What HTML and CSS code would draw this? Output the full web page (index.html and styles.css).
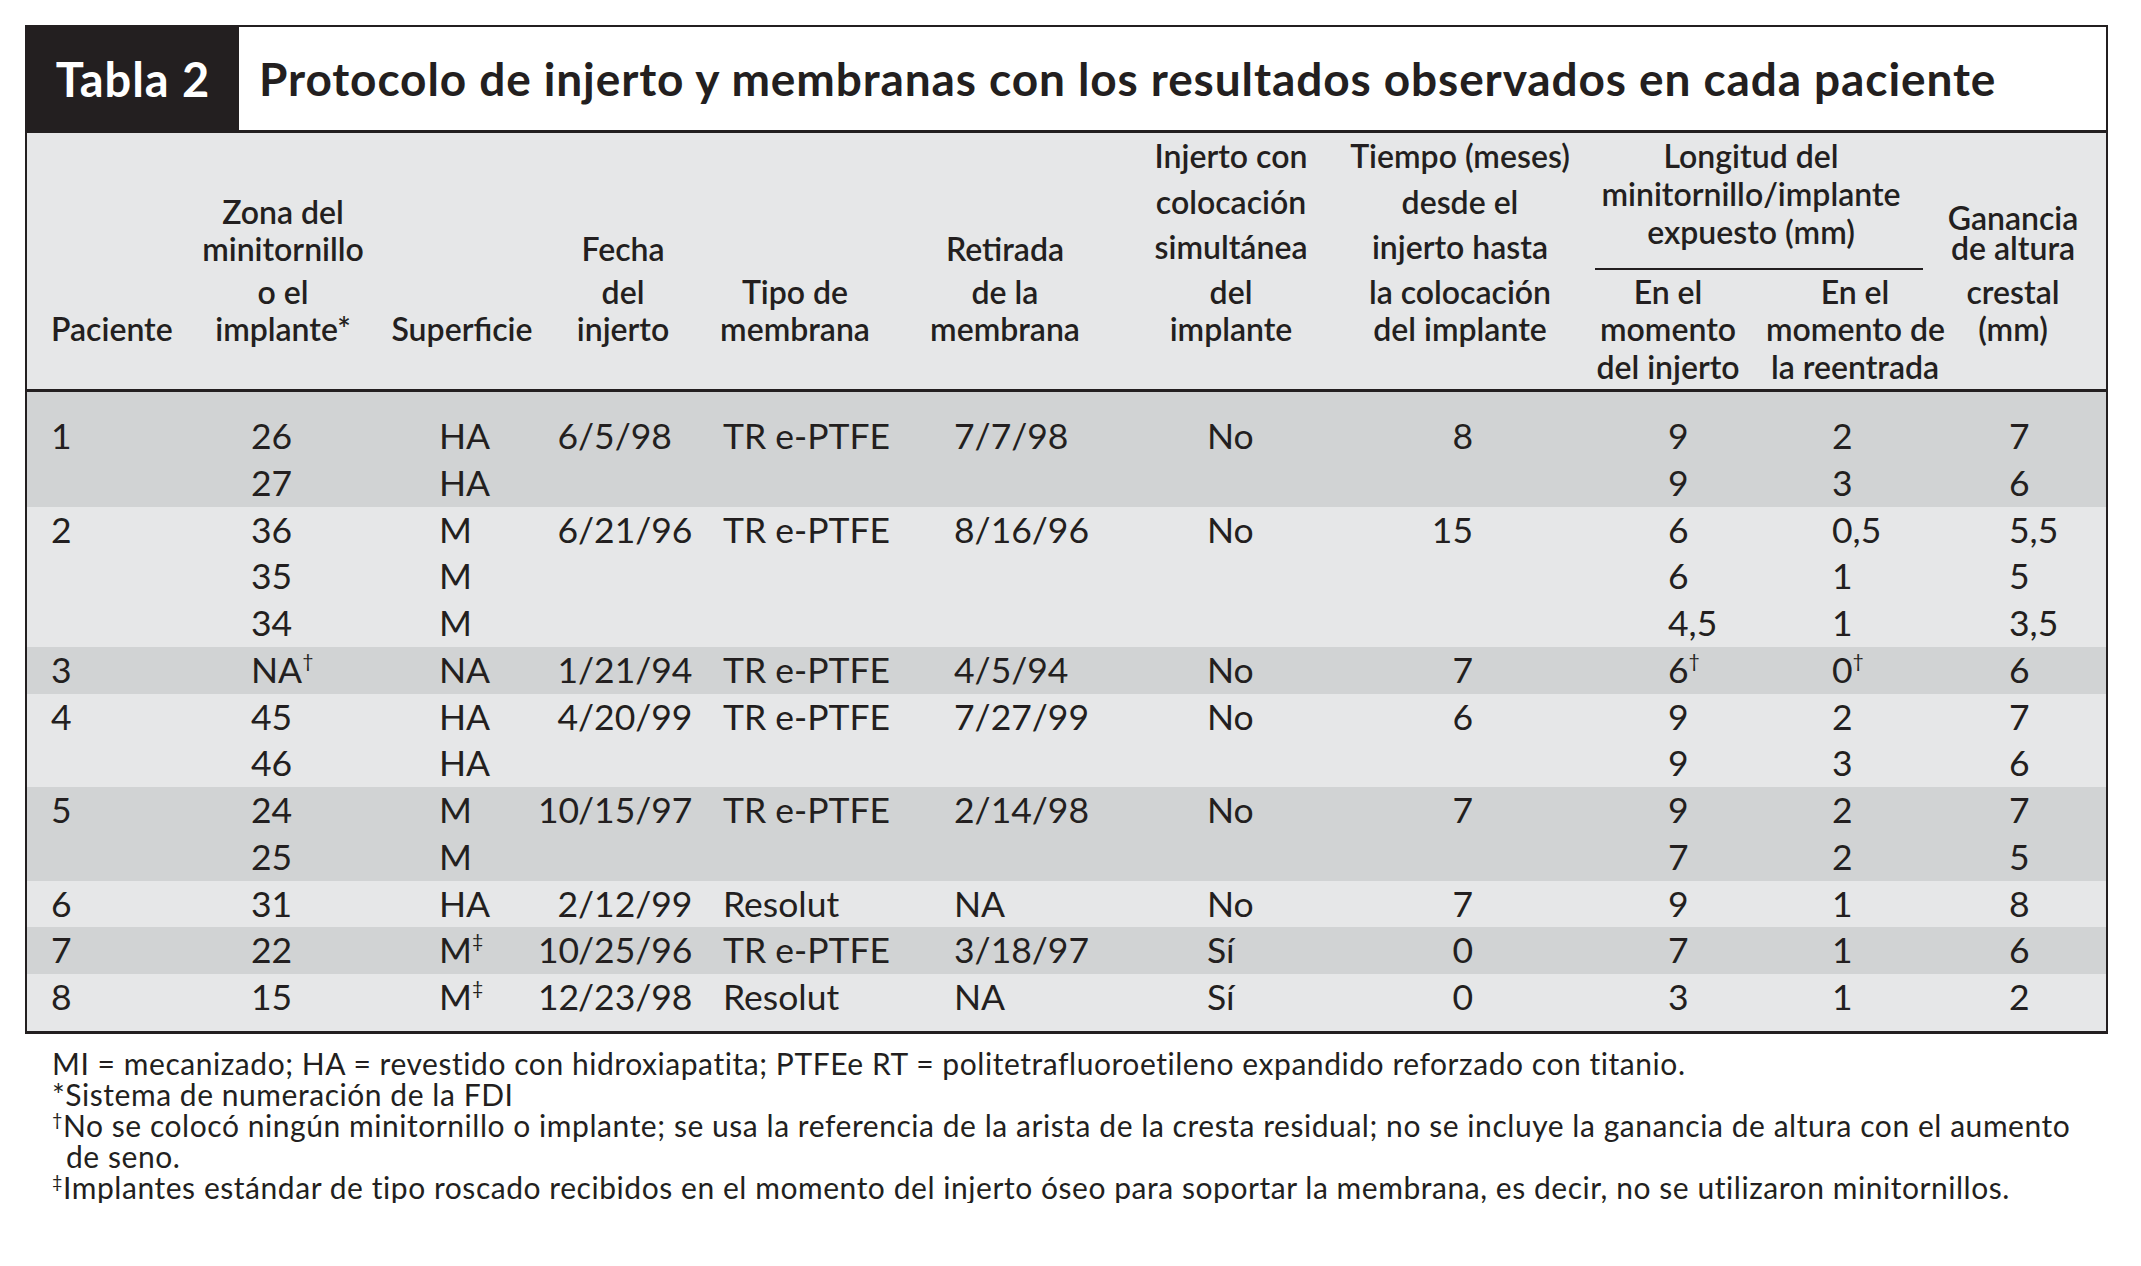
FILE: index.html
```html
<!DOCTYPE html>
<html lang="es">
<head>
<meta charset="utf-8">
<title>Tabla 2</title>
<link rel="stylesheet" href="styles.css">
</head>
<body>
<div class="page">
  <div class="box">
    <div class="titlebar">
      <div class="tag">Tabla 2</div>
      <div class="title">Protocolo de injerto y membranas con los resultados observados en cada paciente</div>
    </div>
    <table class="tbl">
      <colgroup>
        <col class="c1"><col class="c2"><col class="c3"><col class="c4"><col class="c5"><col class="c6"><col class="c7"><col class="c8"><col class="c9"><col class="c10"><col class="c11">
      </colgroup>
      <thead>
        <tr class="ha">
          <th></th>
          <th class="l37">Zona del<br>minitornillo</th>
          <th></th>
          <th class="l37">Fecha</th>
          <th></th>
          <th class="l37">Retirada</th>
          <th class="l45">Injerto con<br>colocación<br>simultánea</th>
          <th class="l45">Tiempo (meses)<br>desde el<br>injerto hasta</th>
          <th colspan="2" class="grpcell"><div class="grp">Longitud del<br>minitornillo/implante<br>expuesto (mm)</div></th>
          <th class="l30 last">Ganancia<br>de altura</th>
        </tr>
        <tr class="hb">
          <th class="left skip">Paciente</th>
          <th>o el<br>implante*</th>
          <th class="skip">Superficie</th>
          <th>del<br>injerto</th>
          <th>Tipo de<br>membrana</th>
          <th>de la<br>membrana</th>
          <th>del<br>implante</th>
          <th>la colocación<br>del implante</th>
          <th>En el<br>momento<br>del injerto</th>
          <th class="c10h">En el<br>momento de<br>la reentrada</th>
          <th class="last">crestal<br>(mm)</th>
        </tr>
      </thead>
      <tbody>
        <tr class="dark first"><td>1</td><td>26</td><td>HA</td><td><span class="m">6</span>/5/98</td><td>TR e-PTFE</td><td>7/7/98</td><td>No</td><td>8</td><td>9</td><td>2</td><td>7</td></tr>
        <tr class="dark"><td></td><td>27</td><td>HA</td><td></td><td></td><td></td><td></td><td></td><td>9</td><td>3</td><td>6</td></tr>
        <tr class="light"><td>2</td><td>36</td><td>M</td><td><span class="m">6</span>/21/96</td><td>TR e-PTFE</td><td>8/16/96</td><td>No</td><td>15</td><td>6</td><td>0,5</td><td>5,5</td></tr>
        <tr class="light"><td></td><td>35</td><td>M</td><td></td><td></td><td></td><td></td><td></td><td>6</td><td>1</td><td>5</td></tr>
        <tr class="light"><td></td><td>34</td><td>M</td><td></td><td></td><td></td><td></td><td></td><td>4,5</td><td>1</td><td>3,5</td></tr>
        <tr class="dark"><td>3</td><td>NA<sup>†</sup></td><td>NA</td><td><span class="m">1</span>/21/94</td><td>TR e-PTFE</td><td>4/5/94</td><td>No</td><td>7</td><td>6<sup>†</sup></td><td>0<sup>†</sup></td><td>6</td></tr>
        <tr class="light"><td>4</td><td>45</td><td>HA</td><td><span class="m">4</span>/20/99</td><td>TR e-PTFE</td><td>7/27/99</td><td>No</td><td>6</td><td>9</td><td>2</td><td>7</td></tr>
        <tr class="light"><td></td><td>46</td><td>HA</td><td></td><td></td><td></td><td></td><td></td><td>9</td><td>3</td><td>6</td></tr>
        <tr class="dark"><td>5</td><td>24</td><td>M</td><td><span class="m">10</span>/15/97</td><td>TR e-PTFE</td><td>2/14/98</td><td>No</td><td>7</td><td>9</td><td>2</td><td>7</td></tr>
        <tr class="dark"><td></td><td>25</td><td>M</td><td></td><td></td><td></td><td></td><td></td><td>7</td><td>2</td><td>5</td></tr>
        <tr class="light"><td>6</td><td>31</td><td>HA</td><td><span class="m">2</span>/12/99</td><td>Resolut</td><td>NA</td><td>No</td><td>7</td><td>9</td><td>1</td><td>8</td></tr>
        <tr class="dark"><td>7</td><td>22</td><td>M<sup>‡</sup></td><td><span class="m">10</span>/25/96</td><td>TR e-PTFE</td><td>3/18/97</td><td>Sí</td><td>0</td><td>7</td><td>1</td><td>6</td></tr>
        <tr class="light last-row"><td>8</td><td>15</td><td>M<sup>‡</sup></td><td><span class="m">12</span>/23/98</td><td>Resolut</td><td>NA</td><td>Sí</td><td>0</td><td>3</td><td>1</td><td>2</td></tr>
      </tbody>
    </table>
  </div>
  <div class="notes">
    <p>MI = mecanizado; HA = revestido con hidroxiapatita; PTFEe RT = politetrafluoroetileno expandido reforzado con titanio.</p>
    <p>*Sistema de numeración de la FDI</p>
    <p><sup>†</sup>No se colocó ningún minitornillo o implante; se usa la referencia de la arista de la cresta residual; no se incluye la ganancia de altura con el aumento<br><span class="cont">de seno.</span></p>
    <p><sup>‡</sup>Implantes estándar de tipo roscado recibidos en el momento del injerto óseo para soportar la membrana, es decir, no se utilizaron minitornillos.</p>
  </div>
</div>
</body>
</html>
```

FILE: styles.css
```css
html, body {
  margin: 0;
  padding: 0;
  background: #ffffff;
}
body {
  font-family: "Lato", "Open Sans", sans-serif;
  color: #231f20;
}
.page {
  padding: 25px 0 0 25px;
  width: 2083px;
}
.box {
  border: 2px solid #231f20;
  border-bottom-width: 3px;
  width: 2079px;
}
.titlebar {
  display: flex;
  height: 103px;
  border-bottom: 3px solid #231f20;
  background: #ffffff;
}
.tag {
  width: 212px;
  background: #231f20;
  color: #ffffff;
  font-weight: 700;
  font-size: 47px;
  letter-spacing: 1px;
  display: flex;
  align-items: center;
  justify-content: center;
}
.title {
  padding-left: 20px;
  font-weight: 700;
  font-size: 46px;
  letter-spacing: 0.9px;
  display: flex;
  align-items: center;
  white-space: nowrap;
}
.tbl {
  border-collapse: separate;
  border-spacing: 0;
  table-layout: fixed;
  width: 2079px;
  background: #e6e7e8;
}
.c1 { width: 153px; }
.c2 { width: 206px; }
.c3 { width: 152px; }
.c4 { width: 170px; }
.c5 { width: 174px; }
.c6 { width: 246px; }
.c7 { width: 206px; }
.c8 { width: 252px; }
.c9 { width: 164px; }
.c10 { width: 194px; }
.c11 { width: 162px; }

thead th {
  font-weight: 600;
  font-size: 32px;
  text-align: center;
  white-space: nowrap;
  padding: 0;
}
tr.ha { height: 135px; }
tr.ha th { vertical-align: bottom; }
tr.ha th.l37 { line-height: 37px; padding-bottom: 3px; }
tr.ha th.l45 { line-height: 45.5px; padding-bottom: 0; }
tr.ha th.l30 { line-height: 30px; padding-bottom: 7px; }
.grp {
  line-height: 38px;
  margin: 0 21px 0 9px;
  padding: 0 16px 17px 0;
  border-bottom: 2px solid #231f20;
}
tr.hb { height: 122px; }
tr.hb th {
  vertical-align: top;
  line-height: 37.5px;
  padding-top: 3px;
  border-bottom: 3px solid #231f20;
}
tr.hb th.skip { padding-top: 40.5px; }
tr.hb th.left { text-align: left; padding-left: 24px; }
th.c10h { padding-left: 16px; }
th.last { padding-right: 24px; }

tbody td {
  font-size: 35.5px;
  line-height: 46.75px;
  padding: 0;
  white-space: nowrap;
  text-align: left;
  vertical-align: top;
}
tr.dark td { background: #d1d3d4; }
tr.light td { background: #e6e7e8; }
tr.first td { padding-top: 21.5px; }
tr.last-row td { padding-bottom: 10px; }

tbody td:nth-child(1) { padding-left: 24px; }
tbody td:nth-child(2) { padding-left: 71px; }
tbody td:nth-child(3) { padding-left: 53px; }
tbody td:nth-child(4) { padding-left: 0; }
tbody td:nth-child(5) { padding-left: 15px; }
tbody td:nth-child(6) { padding-left: 72px; }
tbody td:nth-child(7) { padding-left: 79px; }
tbody td:nth-child(8) { text-align: right; padding-right: 113px; }
tbody td:nth-child(9) { padding-left: 82px; }
tbody td:nth-child(10) { padding-left: 82px; }
tbody td:nth-child(11) { padding-left: 65px; }

.m {
  display: inline-block;
  width: 40px;
  text-align: right;
}
tbody sup {
  font-size: 0.55em;
  vertical-align: 0.75em;
  line-height: 0;
}

.notes {
  margin-top: 14px;
  padding-left: 27px;
  font-size: 30px;
  letter-spacing: 0.55px;
  line-height: 31px;
}
.notes p {
  margin: 0;
  white-space: nowrap;
}
.notes sup {
  font-size: 0.6em;
  vertical-align: 0.6em;
  line-height: 0;
}
.notes .cont {
  padding-left: 14px;
}
```
